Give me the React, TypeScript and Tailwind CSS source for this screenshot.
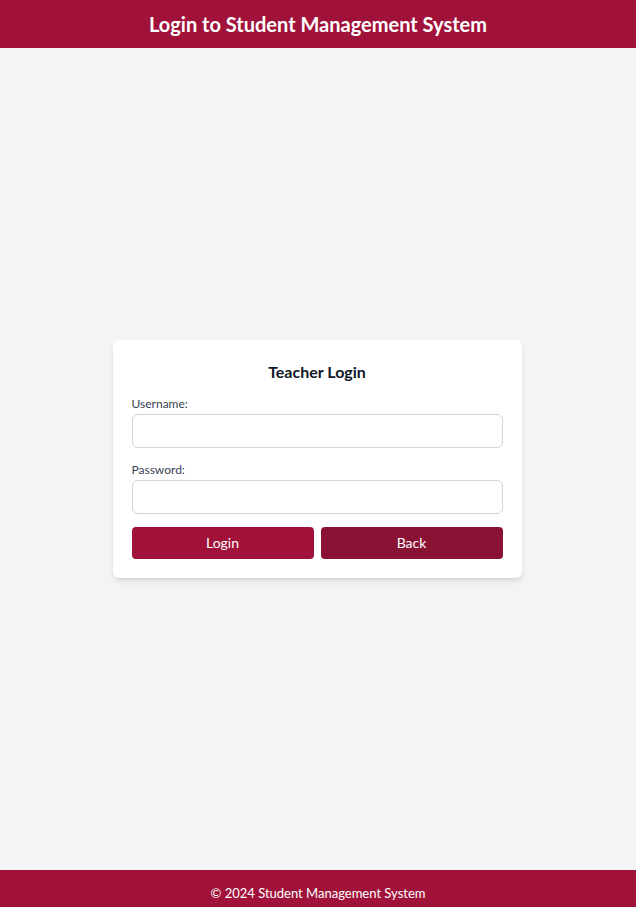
export default function App() {
  return (
    <div
      className="flex min-h-screen flex-col bg-gray-100"
      style={{ fontFamily: 'Lato, "Noto Sans", sans-serif' }}
    >
      <header className="flex h-12 items-center justify-center bg-[#a1123b]">
        <h1 className="text-xl font-bold text-white">
          Login to Student Management System
        </h1>
      </header>

      <main className="flex flex-1 items-center justify-center">
        <div className="mr-[2px] w-[409px] rounded-md bg-white px-[19px] pb-[19px] pt-5 shadow-md">
          <h2 className="mb-3 text-center text-base font-bold text-gray-900">
            Teacher Login
          </h2>
          <label className="mb-0.5 block text-xs text-gray-700">Username:</label>
          <input
            type="text"
            className="block h-[34px] w-full rounded-md border border-gray-300 bg-white px-3 text-sm"
          />
          <label className="mb-0.5 mt-3.5 block text-xs text-gray-700">
            Password:
          </label>
          <input
            type="password"
            className="block h-[34px] w-full rounded-md border border-gray-300 bg-white px-3 text-sm"
          />
          <div className="mt-[13px] flex gap-[7px]">
            <button className="h-8 flex-1 rounded bg-[#a1123b] text-sm text-white">
              Login
            </button>
            <button className="h-8 flex-1 rounded bg-[#8a1335] text-sm text-white">
              Back
            </button>
          </div>
        </div>
      </main>

      <footer className="h-[37px] bg-[#a1123b] pt-[14px] text-center text-[13px] text-white">
        © 2024 Student Management System
      </footer>
    </div>
  );
}
